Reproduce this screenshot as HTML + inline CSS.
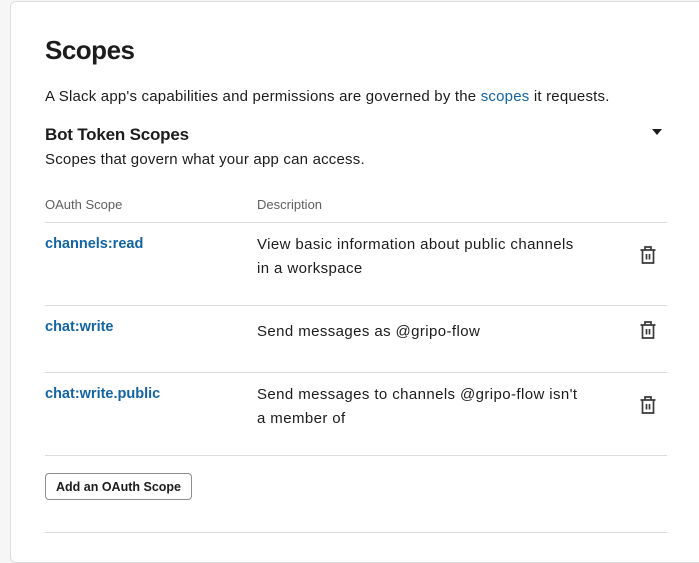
<!DOCTYPE html>
<html><head><style>
body{margin:0;width:699px;height:541px;background:#f6f6f6;font-family:"Liberation Sans",sans-serif;color:#1d1c1d;overflow:hidden;position:relative}
.card{position:absolute;left:10px;top:1px;width:720px;height:560px;background:#fff;border:1px solid #dddddd;border-radius:6px}
.a{position:absolute;white-space:nowrap}
.line{position:absolute;left:45px;width:622px;height:1px;background:#dddddd}
.scope{color:#1264a3;font-weight:bold;font-size:14.5px}
.desc{font-size:15px;line-height:24px;letter-spacing:0.4px}
.trash{position:absolute;left:639px}
</style></head><body>
<div class="card"></div>
<div class="a" style="left:45px;top:35px;font-size:26px;font-weight:bold;letter-spacing:-0.5px">Scopes</div>
<div class="a" style="left:45px;top:88px;font-size:15px;letter-spacing:0.2px">A Slack app's capabilities and permissions are governed by the <span style="color:#1264a3">scopes</span> it requests.</div>
<div class="a" style="left:45px;top:125px;font-size:17px;font-weight:bold;letter-spacing:-0.2px">Bot Token Scopes</div>
<svg class="a" style="left:652px;top:129px" width="10" height="7"><path d="M0 0H10L5 6Z" fill="#1d1c1d"/></svg>
<div class="a" style="left:45px;top:151px;font-size:15px;letter-spacing:0.2px">Scopes that govern what your app can access.</div>
<div class="a" style="left:45px;top:197px;font-size:13px;color:#616061">OAuth Scope</div>
<div class="a" style="left:257px;top:197px;font-size:13px;color:#616061">Description</div>
<div class="line" style="top:222px"></div>
<div class="a scope" style="left:45px;top:236px">channels:read</div>
<div class="a desc" style="left:257px;top:233px">View basic information about public channels<br>in a workspace</div>
<div class="line" style="top:305px"></div>
<div class="a scope" style="left:45px;top:319px">chat:write</div>
<div class="a desc" style="left:257px;top:320px">Send messages as @gripo-flow</div>
<div class="line" style="top:372px"></div>
<div class="a scope" style="left:45px;top:386px">chat:write.public</div>
<div class="a desc" style="left:257px;top:383px">Send messages to channels @gripo-flow isn't<br>a member of</div>
<div class="line" style="top:455px"></div>
<div class="a" style="left:45px;top:473px;width:145px;height:25px;border:1px solid #8d8d8d;border-radius:4px;font-size:12.5px;font-weight:bold;line-height:26px;text-align:center">Add an OAuth Scope</div>
<div class="line" style="top:532px"></div>
<svg class="trash" style="top:245px" width="18" height="20" viewBox="0 0 18 20"><g fill="none" stroke="#3a3a3a" stroke-width="1.7"><path d="M1.5 5H16.5M6 5V2H12V5M3.5 5.5V18H14.5V5.5M7.5 9V14.5M10.5 9V14.5"/></g></svg>
<svg class="trash" style="top:320px" width="18" height="20" viewBox="0 0 18 20"><g fill="none" stroke="#3a3a3a" stroke-width="1.7"><path d="M1.5 5H16.5M6 5V2H12V5M3.5 5.5V18H14.5V5.5M7.5 9V14.5M10.5 9V14.5"/></g></svg>
<svg class="trash" style="top:395px" width="18" height="20" viewBox="0 0 18 20"><g fill="none" stroke="#3a3a3a" stroke-width="1.7"><path d="M1.5 5H16.5M6 5V2H12V5M3.5 5.5V18H14.5V5.5M7.5 9V14.5M10.5 9V14.5"/></g></svg>
</body></html>
